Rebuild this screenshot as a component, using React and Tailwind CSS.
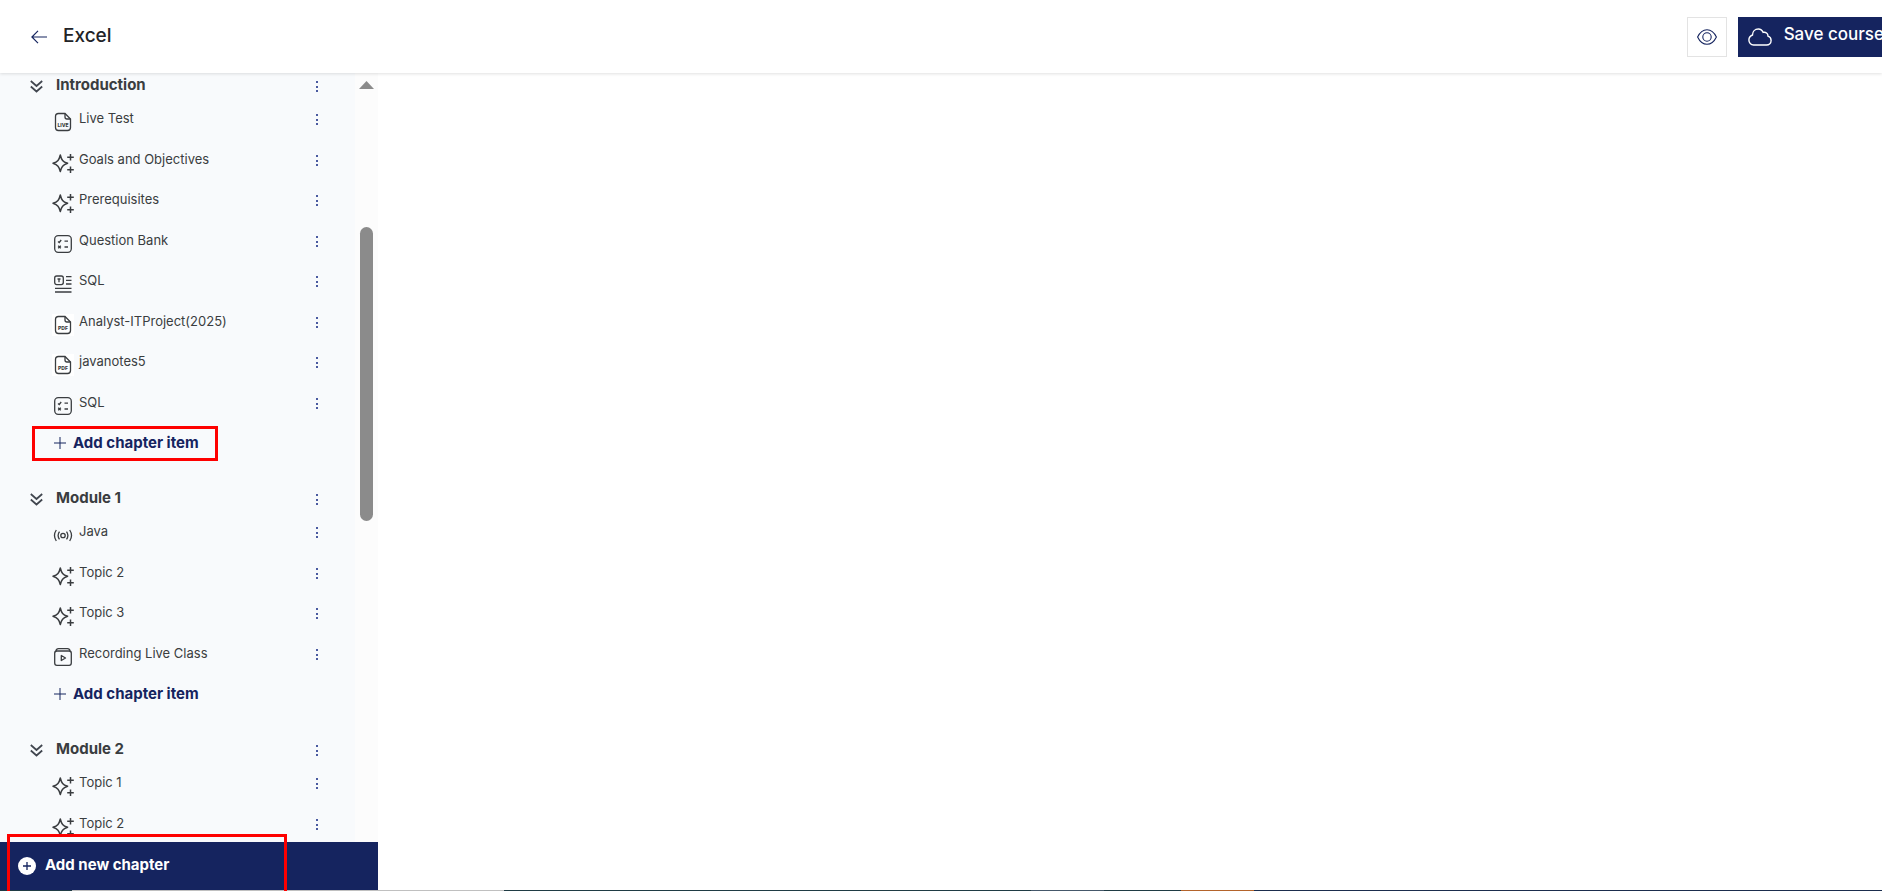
import React from 'react';

const chapters = [
  {
    title: 'Introduction',
    canAddItem: true,
    highlighted: true,
    items: [
      { icon: 'live', name: 'Live Test' },
      { icon: 'topic', name: 'Goals and Objectives' },
      { icon: 'topic', name: 'Prerequisites' },
      { icon: 'quiz', name: 'Question Bank' },
      { icon: 'text', name: 'SQL' },
      { icon: 'pdf', name: 'Analyst-ITProject(2025)' },
      { icon: 'pdf', name: 'javanotes5' },
      { icon: 'quiz', name: 'SQL' },
    ],
  },
  {
    title: 'Module 1',
    canAddItem: true,
    items: [
      { icon: 'stream', name: 'Java' },
      { icon: 'topic', name: 'Topic 2' },
      { icon: 'topic', name: 'Topic 3' },
      { icon: 'recording', name: 'Recording Live Class' },
    ],
  },
  {
    title: 'Module 2',
    items: [
      { icon: 'topic', name: 'Topic 1' },
      { icon: 'topic', name: 'Topic 2' },
    ],
  },
];

const FileIcon = ({ label, className }) => (
  <svg viewBox="0 0 22 22" className={className} fill="none" stroke="currentColor" strokeWidth="1.3" aria-hidden="true">
    <path d="M13 2.5H6.5a3 3 0 0 0-3 3v11a3 3 0 0 0 3 3h9a3 3 0 0 0 3-3V8z" />
    <path d="M13 2.5V6a2 2 0 0 0 2 2h3.5" />
    <text x="11" y="15.5" textAnchor="middle" fontSize="5" fontWeight="800" fontFamily="Inter, sans-serif" fill="currentColor" stroke="none">
      {label}
    </text>
  </svg>
);

const ItemIcon = ({ type }) => {
  if (type === 'live') return <FileIcon label="LIVE" className="size-[22px]" />;
  if (type === 'pdf') return <FileIcon label="PDF" className="size-[22px] bg-white" />;
  return (
    <svg viewBox="0 0 22 22" className="size-[22px]" fill="none" stroke="currentColor" strokeWidth="1.3" aria-hidden="true">
      {type === 'topic' && (
        <>
          <path strokeWidth="1.5" strokeLinejoin="round" d="M8.300 3c1.200 5 2.500 6.600 7.300 8.300-4.800 1.700-6.100 3.300-7.300 8.300-1.200-5-2.500-6.600-7.300-8.300 4.800-1.700 6.100-3.300 7.300-8.300z" />
          <path strokeWidth="1.5" d="M18.500 2v6.500M15.200 5.300h6.600M18.500 14.500v6.500M15.200 17.700h6.600" />
        </>
      )}
      {type === 'quiz' && (
        <>
          <rect x="2.700" y="2.700" width="16.600" height="16.600" rx="3.500" />
          <path d="M6 8.500l1.200 1 2-2.500M12.500 8.200h3.500M6.200 12.700l2.600 2.600M8.800 12.700l-2.600 2.600M12.500 14h3.500" />
        </>
      )}
      {type === 'text' && (
        <>
          <rect x="2.700" y="3" width="8.600" height="8.600" rx="2" />
          <path d="M5.500 6h3M7 6v3.300M14 3.600h5.500M14 7.300h5.500M14 11h5.500M3 15.300h16.500M3 19h16.500" />
        </>
      )}
      {type === 'stream' && (
        <>
          <circle cx="11" cy="11.500" r="2.200" />
          <path d="M7.500 7.700c-1.700 2.300-1.700 5.300 0 7.600M14.500 7.700c1.700 2.300 1.700 5.300 0 7.600M4.300 6c-2.200 3.300-2.200 7.700 0 11M17.700 6c2.200 3.300 2.200 7.700 0 11" />
        </>
      )}
      {type === 'recording' && (
        <>
          <rect x="2.700" y="5" width="16.600" height="14.300" rx="2.200" />
          <path d="M4 5c.2-1.500 1-2.300 2.500-2.300h9c1.500 0 2.300.8 2.500 2.300" />
          <path strokeLinejoin="round" d="M9.300 9.500v5l4.200-2.500z" />
        </>
      )}
    </svg>
  );
};

const MenuButton = ({ label }) => (
  <button type="button" aria-label={label} className="ml-auto flex h-5 w-4 items-center justify-center text-[#4a5aa0]">
    <svg viewBox="0 0 4 12" className="h-3 w-1" fill="currentColor" aria-hidden="true">
      <rect x="1" y="0" width="2" height="2" />
      <rect x="1" y="5" width="2" height="2" />
      <rect x="1" y="9" width="2" height="2" />
    </svg>
  </button>
);

const Chapter = ({ chapter }) => (
  <section className="mb-6">
    <div className="flex h-[27px] items-center">
      <button type="button" aria-label={`Collapse ${chapter.title}`} className="mr-[13px] text-[#41464f]">
        <svg viewBox="0 0 13 13" className="size-[13px]" fill="none" stroke="currentColor" strokeWidth="1.7" aria-hidden="true">
          <path d="M.8 1l5.700 5L12.200 1M.8 6.500l5.700 5 5.700-5" />
        </svg>
      </button>
      <h2 className="pb-[3px] text-[15px] leading-6 font-bold">{chapter.title}</h2>
      <MenuButton label={`${chapter.title} options`} />
    </div>
    <ul className="pl-[22px]">
      {chapter.items.map((item, index) => (
        <li key={index} className="flex items-start odd:h-[41px] even:h-10">
          <span className="mt-[11px] mr-[5px] shrink-0">
            <ItemIcon type={item.icon} />
          </span>
          <span className="mt-2 text-[13px] leading-5">{item.name}</span>
          <span className="mt-2.5 ml-auto">
            <MenuButton label={`${item.name} options`} />
          </span>
        </li>
      ))}
    </ul>
    {chapter.canAddItem && (
      <div className="relative flex h-[38px] items-center pl-6">
        <button type="button" className="flex items-center gap-[7px] text-[15px] leading-6 font-bold text-[#15245f]">
          <svg viewBox="0 0 12 12" className="size-3" stroke="currentColor" strokeWidth="1" aria-hidden="true">
            <path d="M6 0v12M0 6h12" />
          </svg>
          Add chapter item
        </button>
        {chapter.highlighted && (
          <div className="pointer-events-none absolute top-0.5 left-0.5 h-[35px] w-[186px] border-3 border-[#fe0000]" />
        )}
      </div>
    )}
  </section>
);

const App = () => {
  return (
    <div className="relative flex h-screen flex-col overflow-hidden bg-white font-['Inter','Liberation_Sans',sans-serif] text-[#3a3d40]">
      <header className="z-10 flex h-[73px] shrink-0 items-center justify-between bg-white pl-[31px] shadow-[0_1px_3px_rgba(0,0,0,0.12)]">
        <div className="flex items-center gap-4">
          <a href="#courses" aria-label="Back to courses" className="text-[#15245f]">
            <svg viewBox="0 0 16 14" className="h-3.5 w-4" fill="none" stroke="currentColor" strokeWidth="1.2" aria-hidden="true">
              <path d="M16 7H1M7 .8L.9 7 7 13.200" />
            </svg>
          </a>
          <h1 className="pb-0.5 text-[19px] leading-7 font-medium text-[#222327]">Excel</h1>
        </div>
        <div className="-mr-3 flex gap-[11px]">
          <button type="button" aria-label="Preview course" className="flex size-10 items-center justify-center border border-[#e3e3e3] text-[#15245f]">
            <svg viewBox="0 0 20 16" className="h-4 w-5" fill="none" stroke="currentColor" strokeWidth="1.100" aria-hidden="true">
              <path d="M.6 8C3 3 6.200.7 10 .7S17 3 19.400 8c-2.400 5-5.600 7.300-9.400 7.300S3 13 .6 8z" />
              <circle cx="10" cy="8" r="4.200" />
            </svg>
          </button>
          <button type="button" className="flex h-10 items-center gap-3 bg-[#15245f] px-2.5 text-[17px] font-medium whitespace-nowrap text-white">
            <svg viewBox="0 0 24 18" className="h-[18px] w-6" fill="none" stroke="currentColor" strokeWidth="1.400" aria-hidden="true">
              <path d="M5.500 17h13c2.700 0 4.600-2 4.600-4.500 0-2-1.200-3.700-3.100-4.300 0-2.700-2.200-4.400-4.800-3.800C14.300 2.300 12.500 1 10.300 1 7 1 4.500 3.500 4.500 7c-2.200.8-3.600 2.600-3.600 5C.9 14.900 2.900 17 5.500 17z" />
            </svg>
            <span className="pb-[3px]">Save course</span>
          </button>
        </div>
      </header>

      <div className="flex min-h-0 flex-1">
        <aside className="flex w-[378px] shrink-0 flex-col">
          <div className="flex min-h-0 flex-1">
            <nav aria-label="Chapters" className="min-w-0 flex-1 overflow-hidden bg-[#f8fafc] px-[30px]">
              {chapters.map((chapter) => (
                <Chapter key={chapter.title} chapter={chapter} />
              ))}
            </nav>
            <div className="flex w-[23px] flex-col items-center bg-[#fcfcfc]">
              <svg viewBox="0 0 15 8" className="mt-2 h-2 w-[15px]" fill="#8b8b8b" aria-hidden="true">
                <path d="M0 8L7.500 0 15 8z" />
              </svg>
              <div className="mt-[138px] h-[294px] w-[13px] rounded-full bg-[#8b8b8b]" />
            </div>
          </div>
          <div className="relative flex h-12 shrink-0 items-center bg-[#15245f] pl-[18px]">
            <button type="button" className="flex items-center gap-[9px] text-[15px] leading-6 font-bold text-white">
              <svg viewBox="0 0 18 18" className="size-[18px]" aria-hidden="true">
                <circle cx="9" cy="9" r="9" fill="#fff" />
                <path d="M9 5v8M5 9h8" stroke="#15245f" strokeWidth="1.300" />
              </svg>
              <span className="pb-0.5">Add new chapter</span>
            </button>
            <div className="pointer-events-none absolute -top-2 left-[7px] h-[60px] w-[280px] border-3 border-[#fe0000]" />
          </div>
        </aside>
        <main className="flex-1 bg-white" />
      </div>

      <div className="flex h-px shrink-0 bg-[#1b2d4d]">
        <div className="w-[72px] bg-[#1f3b44]" />
        <div className="w-[432px] bg-[#c0c0c0]" />
        <div className="w-[527px] bg-[#1f3b44]" />
        <div className="w-[73px] bg-[#45586a]" />
        <div className="w-[77px] bg-[#1f3b44]" />
        <div className="w-[73px] bg-[#b4642b]" />
      </div>
    </div>
  );
};

export default App;
